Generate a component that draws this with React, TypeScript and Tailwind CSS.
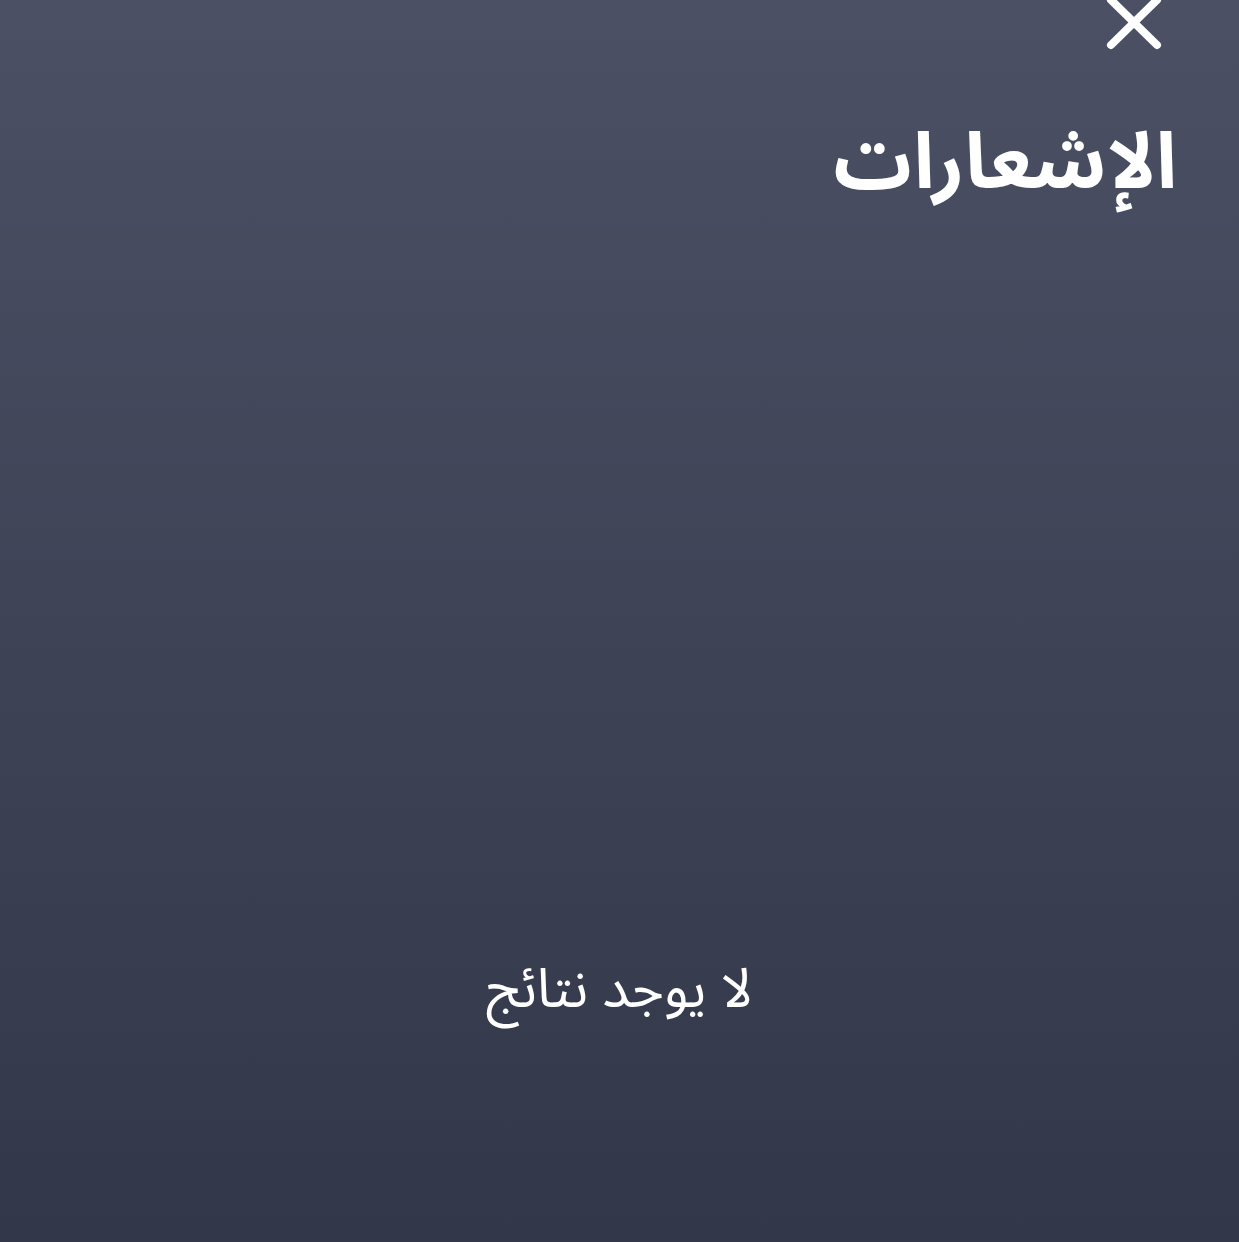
export default function App() {
    return (
        <div
            dir="rtl"
            className="min-h-[1242px] w-full bg-gradient-to-b from-[#4b5064] to-[#323749] text-white flex flex-col"
            style={{ fontFamily: '"Noto Sans Arabic", "Noto Sans", sans-serif' }}
        >
            <div className="flex justify-start pr-[75px] -mt-[6px]">
                <button className="w-[60px] h-[56px] flex items-center justify-center">
                    <svg width="60" height="56" viewBox="0 0 60 56" fill="none" stroke="white" strokeWidth="8" strokeLinecap="round">
                        <path d="M7 6 L53 51" />
                        <path d="M53 6 L7 51" />
                    </svg>
                </button>
            </div>
            <h1 className="pr-[62px] mt-[75px] text-[78px] font-bold leading-none">الإشعارات</h1>
            <p className="mt-[759px] text-center text-[55px] leading-none">لا يوجد نتائج</p>
        </div>
    );
}
